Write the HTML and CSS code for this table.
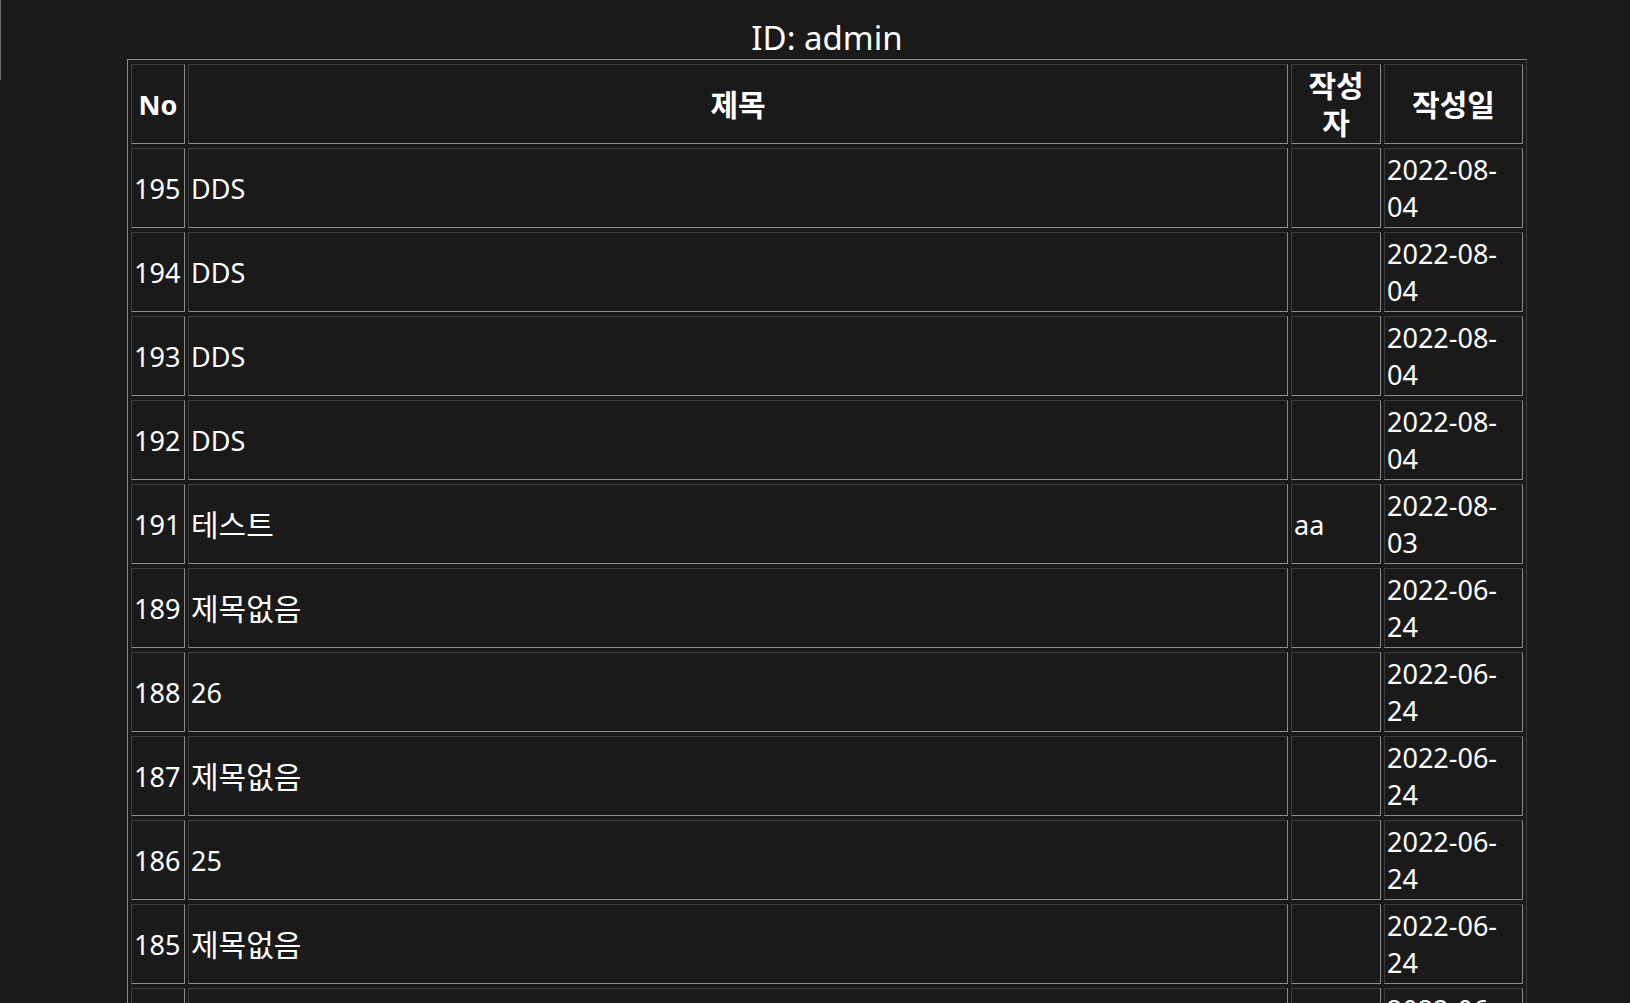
FILE: index.html
```html
<!DOCTYPE html>
<html lang="ko">
<head>
<meta charset="utf-8">
<title>게시판</title>
<link rel="stylesheet" href="styles.css">
</head>
<body>
<div class="edge"></div>
<div class="wrap">
  <div class="title">ID: admin</div>
  <table class="board">
    <colgroup>
      <col class="c-no">
      <col class="c-title">
      <col class="c-writer">
      <col class="c-date">
    </colgroup>
    <thead>
      <tr><th>No</th><th><span class="ko">제목</span></th><th><span class="ko">작성<br>자</span></th><th><span class="ko">작성일</span></th></tr>
    </thead>
    <tbody>
      <tr><td>195</td><td>DDS</td><td></td><td>2022-08-<wbr>04</td></tr>
      <tr><td>194</td><td>DDS</td><td></td><td>2022-08-<wbr>04</td></tr>
      <tr><td>193</td><td>DDS</td><td></td><td>2022-08-<wbr>04</td></tr>
      <tr><td>192</td><td>DDS</td><td></td><td>2022-08-<wbr>04</td></tr>
      <tr><td>191</td><td><span class="ko">테스트</span></td><td>aa</td><td>2022-08-<wbr>03</td></tr>
      <tr><td>189</td><td><span class="ko">제목없음</span></td><td></td><td>2022-06-<wbr>24</td></tr>
      <tr><td>188</td><td>26</td><td></td><td>2022-06-<wbr>24</td></tr>
      <tr><td>187</td><td><span class="ko">제목없음</span></td><td></td><td>2022-06-<wbr>24</td></tr>
      <tr><td>186</td><td>25</td><td></td><td>2022-06-<wbr>24</td></tr>
      <tr><td>185</td><td><span class="ko">제목없음</span></td><td></td><td>2022-06-<wbr>24</td></tr>
      <tr><td>184</td><td>24</td><td></td><td>2022-06-<wbr>24</td></tr>
      <tr><td>183</td><td><span class="ko">제목없음</span></td><td></td><td>2022-06-<wbr>24</td></tr>
    </tbody>
  </table>
</div>
</body>
</html>
```

FILE: styles.css
```css
html, body {
  background: #1a1a1a;
}
body {
  margin: 14px 0 0 0;
  color: #ffffff;
  font-family: "Noto Sans", "Noto Sans CJK KR", sans-serif;
}
.edge {
  position: fixed;
  left: 0;
  top: 0;
  width: 1px;
  height: 80px;
  background: #6e6e6e;
}
.wrap {
  width: 1400px;
  margin-left: 127px;
}
.title {
  text-align: center;
  font-size: 33px;
  line-height: 43px;
  padding-top: 2px;
}
.board {
  width: 1400px;
  table-layout: fixed;
  border-collapse: separate;
  border-spacing: 3px 4px;
  border-style: solid;
  border-width: 1px;
  border-color: #8a8a8a #3c3c3c #3c3c3c #8a8a8a;
  font-size: 27px;
  line-height: 37px;
}
.c-no { width: 54px; }
.c-title { width: 1100px; }
.c-writer { width: 90px; }
.c-date { width: 139px; }
.board th,
.board td {
  padding: 2px;
  border-style: solid;
  border-width: 1px;
  border-color: #3c3c3c #8a8a8a #8a8a8a #3c3c3c;
  height: 74px;
  vertical-align: middle;
  box-sizing: content-box;
}
.board th {
  font-weight: 700;
  text-align: center;
}
.board td {
  font-weight: 400;
  text-align: left;
}
.ko {
  font-size: 30px;
  line-height: 35px;
  vertical-align: -1px;
}
```
